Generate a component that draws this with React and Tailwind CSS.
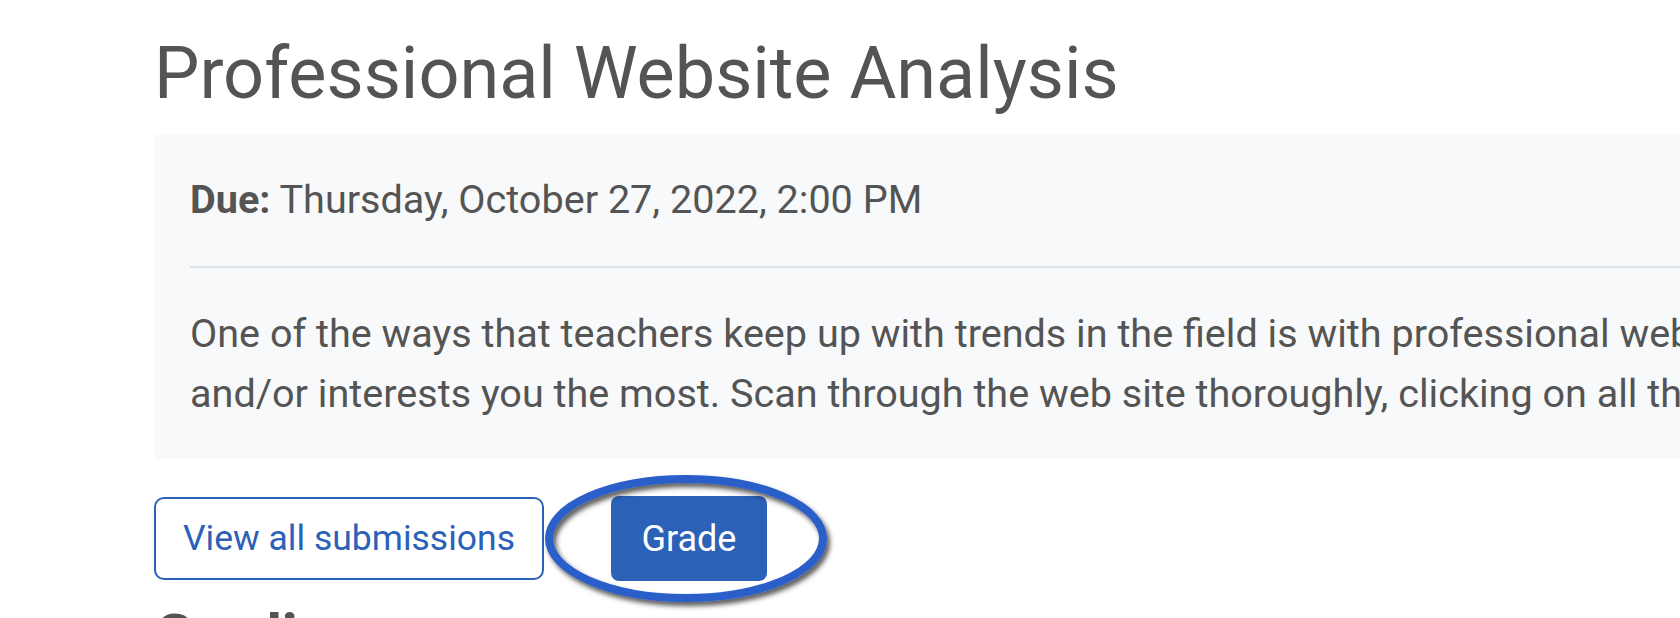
export default function App() {
  return (
    <div className="h-[618px] w-[1680px] overflow-hidden bg-white font-['Roboto',sans-serif] text-[#545454]">
      <div className="w-[2600px] pl-[154px]">
        <h2 className="pt-[31px] text-[72px] font-normal leading-[86px]">Professional Website Analysis</h2>

        <div className="mt-[18px] bg-[#f8f9fa] px-[36px] py-[35px] text-[39.6px] leading-[60px]">
          <div>
            <span className="font-bold">Due:</span> Thursday, October 27, 2022, 2:00 PM
          </div>
          <hr className="my-[36px] border-t-2 border-[#dfe2e6]" />
          <p className="whitespace-nowrap">
            One of the ways that teachers keep up with trends in the field is with professional web sites. Choose the web site that best fits your content area
            <br />
            and/or interests you the most. Scan through the web site thoroughly, clicking on all the links to see what the site has to offer.
          </p>
        </div>

        <div className="mt-[37px] flex items-start">
          <button className="mt-px h-[83px] rounded-[10px] border-2 border-[#2b61b7] px-[27px] text-[35.5px] text-[#2b61b7]">
            View all submissions
          </button>
          <span className="relative ml-[67px]">
            <button className="h-[85px] w-[156px] rounded-[8px] bg-[#2b61b7] text-[36px] text-white">Grade</button>
            {/* annotation circle */}
            <svg className="pointer-events-none absolute left-[-76px] top-[-31px]" width="310" height="160" viewBox="0 0 310 160">
              <defs>
                <filter id="shadow" x="-10%" y="-10%" width="120%" height="130%">
                  <feDropShadow dx="3" dy="4" stdDeviation="2.5" floodColor="#000" floodOpacity="0.65" />
                </filter>
              </defs>
              <ellipse cx="151" cy="73.5" rx="137" ry="59.5" fill="none" stroke="#2c5fca" strokeWidth="8" filter="url(#shadow)" />
            </svg>
          </span>
        </div>

        <h3 className="mt-[19px] text-[60px] font-bold leading-[1.2]">Grading</h3>
      </div>
    </div>
  )
}
